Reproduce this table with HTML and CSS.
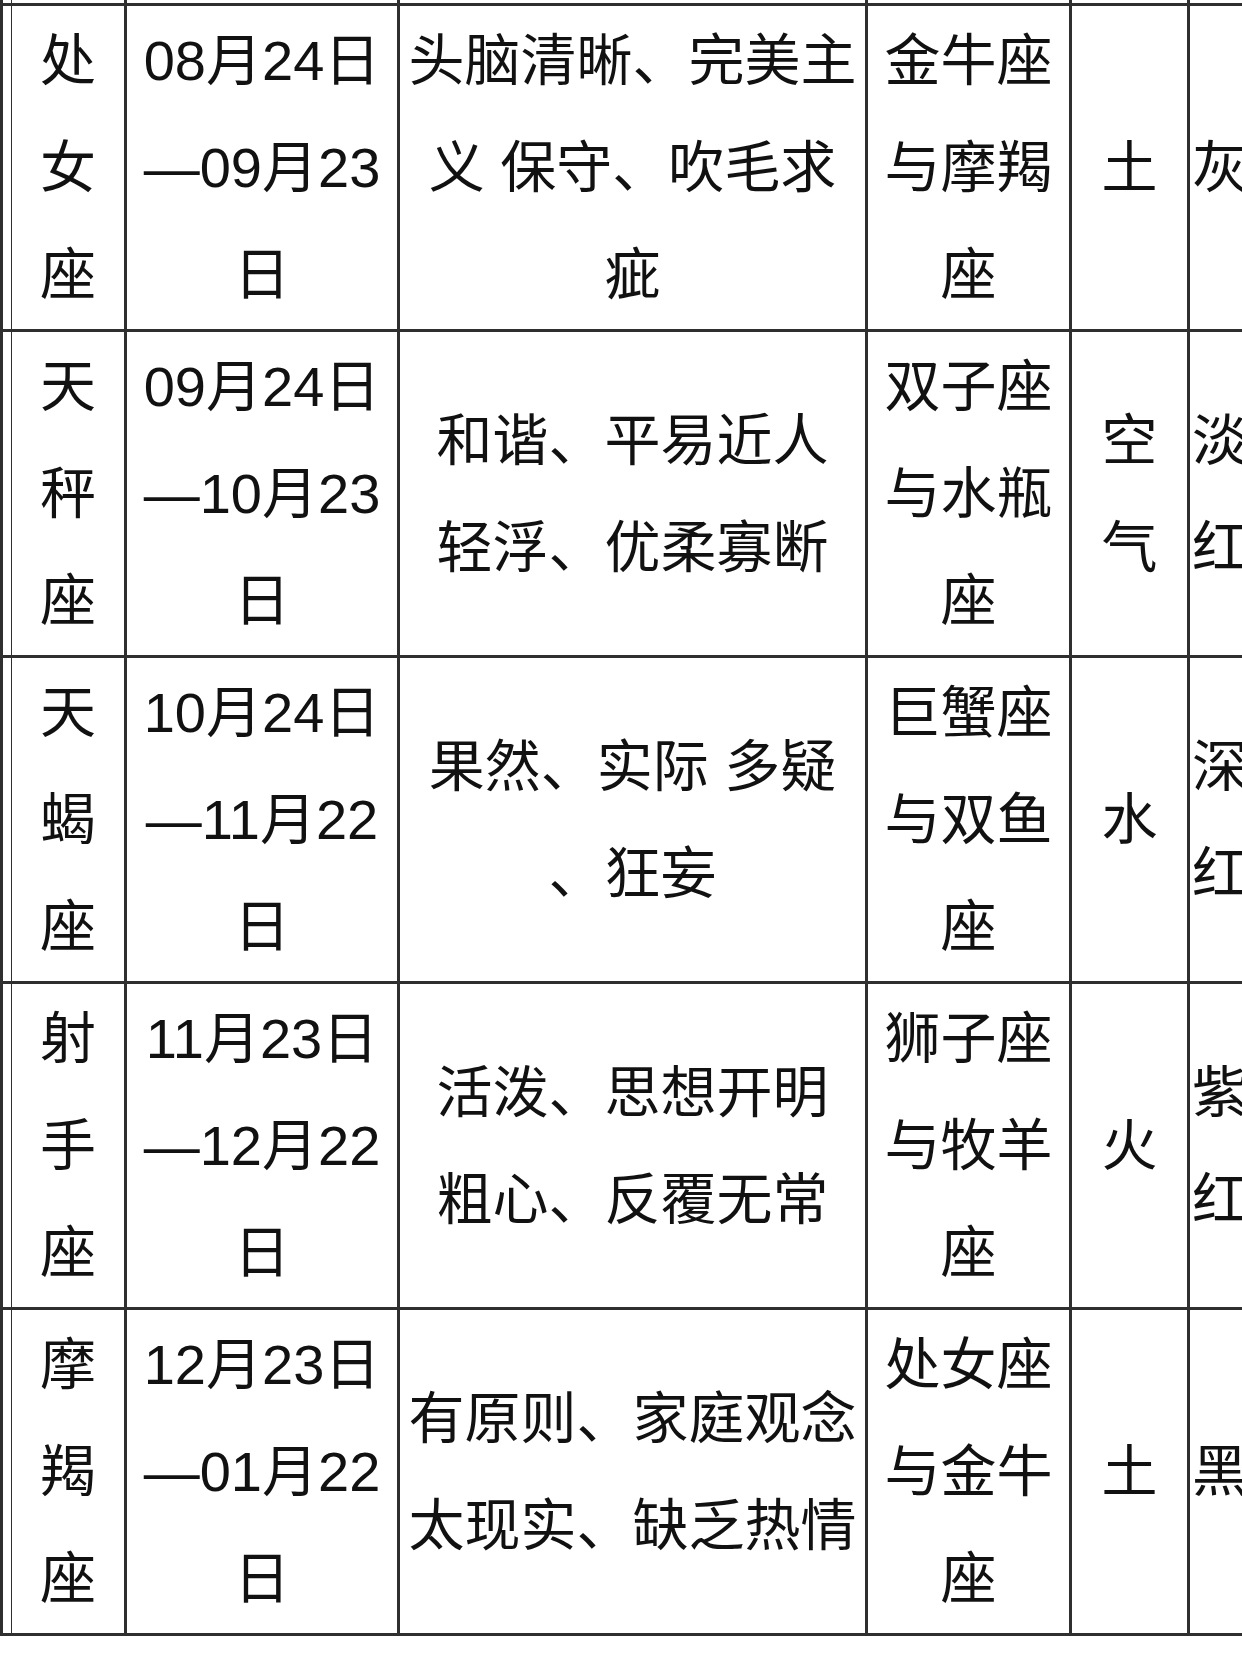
FILE: index.html
```html
<!DOCTYPE html>
<html lang="zh-CN">
<head>
<meta charset="utf-8">
<title>星座表</title>
<link rel="stylesheet" href="styles.css">
</head>
<body>
<div class="viewport">
  <div class="grid" role="table">
    <div class="cell"></div><div class="cell"></div><div class="cell"></div><div class="cell"></div><div class="cell"></div><div class="cell"></div><div class="cell"></div>

    <div class="cell"></div>
    <div class="cell">处女座</div>
    <div class="cell">08月24日—09月23日</div>
    <div class="cell">头脑清晰、完美主<br>义 保守、吹毛求<br>疵</div>
    <div class="cell">金牛座与摩羯座</div>
    <div class="cell">土</div>
    <div class="cell edge">灰</div>

    <div class="cell"></div>
    <div class="cell">天秤座</div>
    <div class="cell">09月24日—10月23日</div>
    <div class="cell">和谐、平易近人<br>轻浮、优柔寡断</div>
    <div class="cell">双子座与水瓶座</div>
    <div class="cell">空气</div>
    <div class="cell edge">淡红</div>

    <div class="cell"></div>
    <div class="cell">天蝎座</div>
    <div class="cell">10月24日—11月22日</div>
    <div class="cell">果然、实际 多疑<br>、狂妄</div>
    <div class="cell">巨蟹座与双鱼座</div>
    <div class="cell">水</div>
    <div class="cell edge">深红</div>

    <div class="cell"></div>
    <div class="cell">射手座</div>
    <div class="cell">11月23日—12月22日</div>
    <div class="cell">活泼、思想开明<br>粗心、反覆无常</div>
    <div class="cell">狮子座与牧羊座</div>
    <div class="cell">火</div>
    <div class="cell edge">紫红</div>

    <div class="cell"></div>
    <div class="cell">摩羯座</div>
    <div class="cell">12月23日—01月22日</div>
    <div class="cell">有原则、家庭观念<br>太现实、缺乏热情</div>
    <div class="cell">处女座与金牛座</div>
    <div class="cell">土</div>
    <div class="cell edge">黑</div>
  </div>
</div>
</body>
</html>
```

FILE: styles.css
```css
html, body {
  margin: 0;
  padding: 0;
  background: #ffffff;
  overflow: hidden;
}

.viewport {
  width: 1242px;
  height: 1660px;
  overflow: hidden;
  background: #ffffff;
}

.grid {
  display: grid;
  width: max-content;
  grid-template-columns: 6px 112px 270px 465px 201px 115px 60px;
  grid-template-rows: 3px repeat(5, 323px);
  gap: 3px;
  padding: 0 3px 3px 3px;
  background: #2f2f2f;
  font-family: "Liberation Sans", "Noto Sans CJK SC", sans-serif;
  font-size: 56px;
  line-height: 107px;
  color: #111111;
}

.cell {
  background: #ffffff;
  display: flex;
  flex-direction: column;
  justify-content: center;
  text-align: center;
  padding: 0 4px;
  min-width: 0;
  overflow: visible;
}

.cell.edge {
  padding: 0 2px;
}
```
